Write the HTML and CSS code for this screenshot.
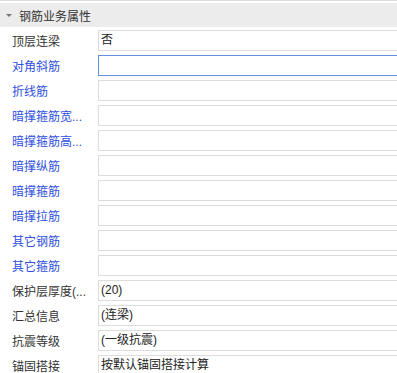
FILE: index.html
```html
<!DOCTYPE html>
<html>
<head>
    <meta charset="utf-8" />
    <title>钢筋业务属性</title>
    <link rel="stylesheet" href="styles.css">
</head>
<body>
    <div class="panel">
        <div class="kopf">
            <span class="pfeil"></span>
            <span>钢筋业务属性</span>
        </div>
        <div class="zeile">
            <div class="name">顶层连梁</div>
            <div class="wert">否</div>
        </div>
        <div class="zeile">
            <div class="name blau">对角斜筋</div>
            <div class="wert aktiv"></div>
        </div>
        <div class="zeile">
            <div class="name blau">折线筋</div>
            <div class="wert"></div>
        </div>
        <div class="zeile">
            <div class="name blau" title="暗撑箍筋宽度(mm)">暗撑箍筋宽...</div>
            <div class="wert"></div>
        </div>
        <div class="zeile">
            <div class="name blau" title="暗撑箍筋高度(mm)">暗撑箍筋高...</div>
            <div class="wert"></div>
        </div>
        <div class="zeile">
            <div class="name blau">暗撑纵筋</div>
            <div class="wert"></div>
        </div>
        <div class="zeile">
            <div class="name blau">暗撑箍筋</div>
            <div class="wert"></div>
        </div>
        <div class="zeile">
            <div class="name blau">暗撑拉筋</div>
            <div class="wert"></div>
        </div>
        <div class="zeile">
            <div class="name blau">其它钢筋</div>
            <div class="wert"></div>
        </div>
        <div class="zeile">
            <div class="name blau">其它箍筋</div>
            <div class="wert"></div>
        </div>
        <div class="zeile">
            <div class="name" title="保护层厚度(mm)">保护层厚度(...</div>
            <div class="wert">(20)</div>
        </div>
        <div class="zeile">
            <div class="name">汇总信息</div>
            <div class="wert">(连梁)</div>
        </div>
        <div class="zeile">
            <div class="name">抗震等级</div>
            <div class="wert">(一级抗震)</div>
        </div>
        <div class="zeile">
            <div class="name">锚固搭接</div>
            <div class="wert">按默认锚固搭接计算</div>
        </div>
    </div>
</body>
</html>
```

FILE: styles.css
```css
* {
    margin: 0;
    padding: 0;
    box-sizing: border-box;
}

body {
    background: white;
    overflow: hidden;
    font-family: "Liberation Sans", "Noto Sans CJK SC", sans-serif;
    font-size: 12px;
    color: #333;
}

.panel {
    width: 100%;
    border-top: 1px solid #dedede;
    padding-top: 2px;
}

.kopf {
    height: 24px;
    background: #ececec;
    display: flex;
    align-items: center;
    padding-left: 6px;
    color: #333;
}

.pfeil {
    width: 0;
    height: 0;
    border-left: 3px solid transparent;
    border-right: 3px solid transparent;
    border-top: 3px solid #777;
    margin-right: 7px;
}

.zeile {
    height: 25px;
    display: flex;
    align-items: center;
    padding-top: 2px;
}

.name {
    width: 98px;
    padding-left: 12px;
    white-space: nowrap;
}

    .name.blau {
        color: #2f4fe0;
    }

.wert {
    flex: 1;
    height: 21px;
    border: 1px solid #dcdcdc;
    border-right: none;
    padding-left: 2px;
    line-height: 19px;
    color: #222;
    white-space: nowrap;
}

    .wert.aktiv {
        border-color: #6390de;
    }
```
